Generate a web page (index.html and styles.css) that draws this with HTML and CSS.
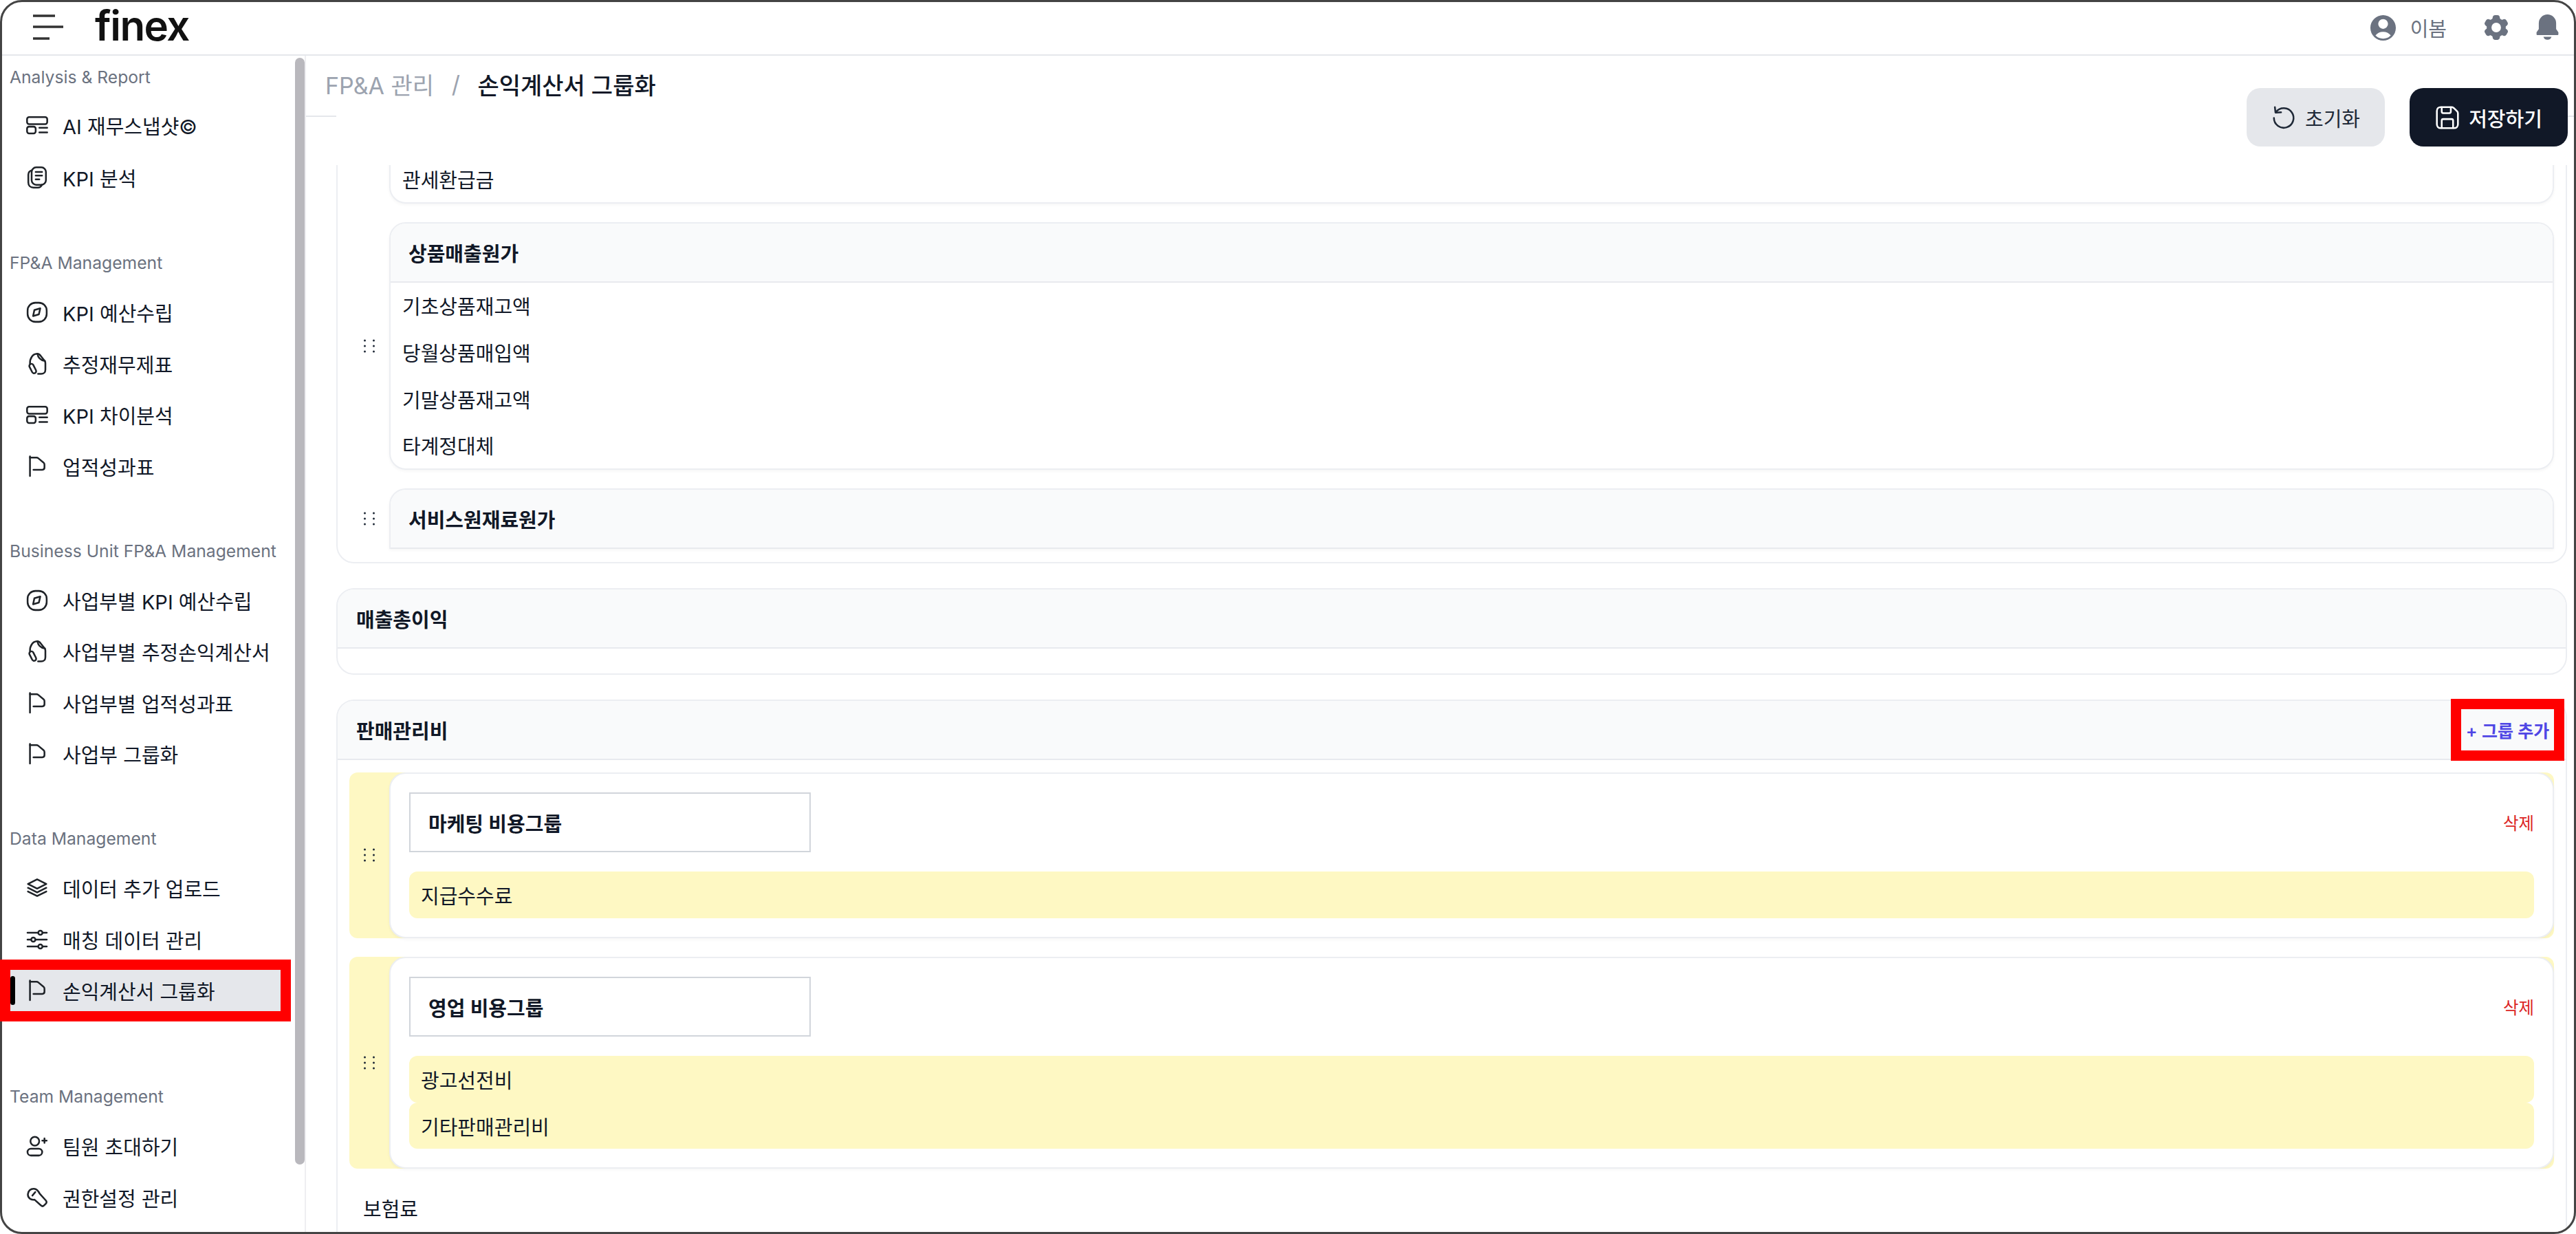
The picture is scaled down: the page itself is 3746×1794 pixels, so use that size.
FILE: index.html
```html
<!DOCTYPE html>
<html lang="ko">
<head>
  <meta charset="UTF-8" />
  <meta name="viewport" content="width=device-width, initial-scale=1.0"/>
  <title>finex - 손익계산서 그룹화</title>
  <link rel="stylesheet" href="styles.css">
</head>
<body>
  <svg class="sprite" xmlns="http://www.w3.org/2000/svg">
    <symbol id="i-report" viewBox="0 0 24 24"><rect x="1" y="3.2" width="22" height="7.6" rx="2.2"/><rect x="1" y="13.6" width="9.4" height="7.4" rx="2.2"/><path d="M14.4 14.8H23M14.4 19.8H23"/></symbol>
    <symbol id="i-docs" viewBox="0 0 24 24"><rect x="6" y="1" width="15.6" height="19" rx="5"/><path d="M10.4 6h7M10.4 10h7M10.4 14h4"/><path d="M6 4.2C3.6 5 2.4 6.6 2.4 9v8.4c0 3.4 2.2 5.6 5.6 5.6h4.6c2.2 0 3.8-1 4.6-3"/></symbol>
    <symbol id="i-compass" viewBox="0 0 24 24"><rect x="1.6" y="1.6" width="20.8" height="20.8" rx="8.5"/><path class="solid" d="M9 9.6l6.4-1.9-1.5 6.6-6.3 1.8z"/></symbol>
    <symbol id="i-note" viewBox="0 0 24 24"><path d="M4.200 11.500C4 6 7 1.200 12 1c2 0 3 .8 3.800 2.200l4.500 5.600c.5.700.7 1.500.7 2.500v7c0 2.800-1.800 4.600-4.600 4.600h-3.400"/><path d="M12.500 1.200c.3 3.500 3 7 8 7.600"/><rect x="4.900" y="11.600" width="4.600" height="11" rx="2.300" transform="rotate(-27 7.200 17.100)"/></symbol>
    <symbol id="i-flag" viewBox="0 0 24 24"><path d="M4.200 1.200V22.500"/><path d="M4.200 2.400h7.200c.8 0 1.200.2 1.800.7l5.700 4.700c.8.700 1.100 1.300 1.100 2.300v3.300c0 1.500-.8 2.300-2.300 2.300H8"/></symbol>
    <symbol id="i-layers" viewBox="0 0 24 24"><path d="M12 2.600l10 5-10 5-10-5z"/><path d="M2 11.800l10 5 10-5"/><path d="M2 15.800l10 5 10-5"/></symbol>
    <symbol id="i-sliders" viewBox="0 0 24 24"><path d="M1.500 4.500h11.200M18.200 4.500h4.300M1.500 12h3.500M10.500 12h12M1.500 19.500h11.200M18.200 19.500h4.300"/><circle cx="15.500" cy="4.500" r="2.300"/><circle cx="7.800" cy="12" r="2.300"/><circle cx="15.500" cy="19.500" r="2.300"/></symbol>
    <symbol id="i-user-plus" viewBox="0 0 24 24"><circle cx="9.500" cy="6.800" r="4.800"/><rect x="1.500" y="15" width="16" height="7.400" rx="3.700"/><path d="M20 3.800v4.800M17.600 6.200h4.800"/></symbol>
    <symbol id="i-key" viewBox="0 0 24 24"><path d="M14.800 7.800l6.700 7.400c.9 1.100.9 2.500 0 3.500l-1.900 1.900c-1 1-2.400 1-3.400 0l-7-6.300c-4 .8-7.500-1.900-7.300-6C2.100 4.800 5 2.200 8.500 2.400c2.800.1 5 2.700 6.300 5.400z"/><path d="M6.800 9.800L10 6"/></symbol>
    <symbol id="i-reset" viewBox="0 0 24 24"><path d="M4.600 6.400a9.500 9.500 0 1 1-2.100 6"/><path d="M3.400 1.800l.6 5.300 5.400-.3"/></symbol>
    <symbol id="i-save" viewBox="0 0 24 24"><path d="M5.500 1.800h10.600c.8 0 1.400.3 2 .8l3.200 3.200c.6.600.9 1.300.9 2.100v10.600c0 2.200-1.500 3.700-3.700 3.700H5.500c-2.200 0-3.700-1.500-3.700-3.700V5.500c0-2.200 1.500-3.700 3.700-3.700z"/><path d="M6.500 22v-7.200c0-.9.500-1.400 1.400-1.400h8.200c.9 0 1.400.5 1.400 1.400V22"/><path d="M6.500 2v4.200c0 .9.500 1.400 1.400 1.400h6c.9 0 1.400-.5 1.400-1.400V2"/></symbol>
    <symbol id="i-grip" viewBox="0 0 16 20"><circle cx="1.500" cy="2" r="1.500"/><circle cx="14.500" cy="2" r="1.500"/><circle cx="1.500" cy="10" r="1.500"/><circle cx="14.500" cy="10" r="1.500"/><circle cx="1.500" cy="18" r="1.500"/><circle cx="14.500" cy="18" r="1.500"/></symbol>
  </svg>

  <div class="window">
    <header class="topbar">
      <svg class="menu-icon" viewBox="0 0 44 36"><path d="M0 2h32M0 18h44M0 35h24"/></svg>
      <span class="logo">finex</span>
      <div class="topbar-right">
        <svg class="top-icon user-icon" viewBox="2.250 2.250 19.500 19.500"><path fill-rule="evenodd" d="M18.685 19.097A9.723 9.723 0 0021.750 12c0-5.385-4.365-9.750-9.750-9.750S2.250 6.615 2.250 12a9.723 9.723 0 003.065 7.097A9.716 9.716 0 0012 21.750a9.716 9.716 0 006.685-2.653zm-12.540-1.285A7.486 7.486 0 0112 15a7.486 7.486 0 015.855 2.812A8.224 8.224 0 0112 20.250a8.224 8.224 0 01-5.855-2.438zM15.750 9a3.750 3.750 0 11-7.500 0 3.750 3.750 0 017.500 0z"/></svg>
        <span class="user-name">이봄</span>
        <svg class="top-icon gear-icon" viewBox="2.300 2.250 19.400 19.500"><path fill-rule="evenodd" d="M11.078 2.250c-.917 0-1.699.663-1.850 1.567L9.050 4.889c-.02.120-.115.260-.297.348a7.493 7.493 0 00-.986.570c-.166.115-.334.126-.450.083L6.300 5.508a1.875 1.875 0 00-2.282.819l-.922 1.597a1.875 1.875 0 00.432 2.385l.840.692c.095.078.170.229.154.430a7.598 7.598 0 000 1.139c.015.200-.059.352-.153.430l-.841.692a1.875 1.875 0 00-.432 2.385l.922 1.597a1.875 1.875 0 002.282.818l1.019-.382c.115-.043.283-.031.450.082.312.214.641.405.985.570.182.088.277.228.297.350l.178 1.071c.151.904.933 1.567 1.850 1.567h1.844c.916 0 1.699-.663 1.850-1.567l.178-1.072c.02-.120.114-.260.297-.349.344-.165.673-.356.985-.570.167-.114.335-.125.450-.082l1.020.382a1.875 1.875 0 002.280-.819l.923-1.597a1.875 1.875 0 00-.432-2.385l-.840-.692c-.095-.078-.170-.229-.154-.430a7.614 7.614 0 000-1.139c-.016-.200.059-.352.153-.430l.840-.692c.708-.582.891-1.590.433-2.385l-.922-1.597a1.875 1.875 0 00-2.282-.818l-1.020.382c-.114.043-.282.031-.449-.083a7.490 7.490 0 00-.985-.570c-.183-.087-.277-.227-.297-.348l-.179-1.072a1.875 1.875 0 00-1.850-1.567h-1.843zM12 15.750a3.750 3.750 0 100-7.500 3.750 3.750 0 000 7.500z"/></svg>
        <svg class="top-icon bell-icon" viewBox="2.500 1 19 22"><path d="M12 1a7.300 7.300 0 0 0-7.300 7.300v5L2.800 16v1.600c0 .5.300.8.800.8h16.800c.5 0 .8-.3.800-.8V16l-1.900-2.700v-5A7.300 7.300 0 0 0 12 1z"/><path d="M8.600 19.800h6.800A3.500 3.200 0 0 1 8.600 19.800z"/></svg>
      </div>
    </header>

    <div class="layout">
      <aside class="sidebar">
        <span class="sidebar-thumb"></span>

        <section class="nav-group nav-group-first">
          <div class="nav-label">Analysis &amp; Report</div>
          <ul class="nav-list">
            <li class="nav-item"><svg class="nav-icon"><use href="#i-report"/></svg>AI 재무스냅샷©</li>
            <li class="nav-item"><svg class="nav-icon"><use href="#i-docs"/></svg>KPI 분석</li>
          </ul>
        </section>

        <section class="nav-group nav-group-second">
          <div class="nav-label">FP&amp;A Management</div>
          <ul class="nav-list">
            <li class="nav-item"><svg class="nav-icon"><use href="#i-compass"/></svg>KPI 예산수립</li>
            <li class="nav-item"><svg class="nav-icon"><use href="#i-note"/></svg>추정재무제표</li>
            <li class="nav-item"><svg class="nav-icon"><use href="#i-report"/></svg>KPI 차이분석</li>
            <li class="nav-item"><svg class="nav-icon"><use href="#i-flag"/></svg>업적성과표</li>
          </ul>
        </section>

        <section class="nav-group">
          <div class="nav-label">Business Unit FP&amp;A Management</div>
          <ul class="nav-list">
            <li class="nav-item"><svg class="nav-icon"><use href="#i-compass"/></svg>사업부별 KPI 예산수립</li>
            <li class="nav-item"><svg class="nav-icon"><use href="#i-note"/></svg>사업부별 추정손익계산서</li>
            <li class="nav-item"><svg class="nav-icon"><use href="#i-flag"/></svg>사업부별 업적성과표</li>
            <li class="nav-item"><svg class="nav-icon"><use href="#i-flag"/></svg>사업부 그룹화</li>
          </ul>
        </section>

        <section class="nav-group">
          <div class="nav-label">Data Management</div>
          <ul class="nav-list">
            <li class="nav-item"><svg class="nav-icon"><use href="#i-layers"/></svg>데이터 추가 업로드</li>
            <li class="nav-item"><svg class="nav-icon"><use href="#i-sliders"/></svg>매칭 데이터 관리</li>
            <li class="nav-item nav-item-active"><svg class="nav-icon"><use href="#i-flag"/></svg>손익계산서 그룹화</li>
          </ul>
        </section>

        <section class="nav-group nav-group-team">
          <div class="nav-label">Team Management</div>
          <ul class="nav-list">
            <li class="nav-item"><svg class="nav-icon"><use href="#i-user-plus"/></svg>팀원 초대하기</li>
            <li class="nav-item"><svg class="nav-icon"><use href="#i-key"/></svg>권한설정 관리</li>
          </ul>
        </section>
      </aside>

      <main class="main">
        <div class="breadcrumb">
          <span class="crumb-parent">FP&amp;A 관리</span>
          <span class="crumb-sep">/</span>
          <span class="crumb-current">손익계산서 그룹화</span>
        </div>
        <div class="toolbar-strip"></div>

        <div class="actions">
          <button class="btn btn-light"><svg class="btn-icon"><use href="#i-reset"/></svg>초기화</button>
          <button class="btn btn-dark"><svg class="btn-icon"><use href="#i-save"/></svg>저장하기</button>
        </div>

        <div class="scroll">
          <div class="scroll-inner">
            <section class="panel panel-top">
              <div class="row">
                <div class="card card-cut">
                  <div class="line">관세환급금</div>
                </div>
              </div>
              <div class="row">
                <span class="grip"><svg><use href="#i-grip"/></svg></span>
                <div class="card">
                  <div class="card-head">상품매출원가</div>
                  <div class="line">기초상품재고액</div>
                  <div class="line">당월상품매입액</div>
                  <div class="line">기말상품재고액</div>
                  <div class="line">타계정대체</div>
                </div>
              </div>
              <div class="row">
                <span class="grip"><svg><use href="#i-grip"/></svg></span>
                <div class="card card-empty">
                  <div class="card-head">서비스원재료원가</div>
                </div>
              </div>
            </section>

            <section class="panel panel-plain">
              <div class="panel-head"><span>매출총이익</span></div>
              <div class="panel-empty"></div>
            </section>

            <section class="panel panel-open">
              <div class="panel-head">
                <span>판매관리비</span>
                <button class="add-group">+ 그룹 추가</button>
              </div>
              <div class="row row-yellow">
                <span class="grip"><svg><use href="#i-grip"/></svg></span>
                <div class="card card-group">
                  <div class="group-top">
                    <div class="group-name">마케팅 비용그룹</div>
                    <span class="group-del">삭제</span>
                  </div>
                  <div class="chip">지급수수료</div>
                </div>
              </div>
              <div class="row row-yellow">
                <span class="grip"><svg><use href="#i-grip"/></svg></span>
                <div class="card card-group">
                  <div class="group-top">
                    <div class="group-name">영업 비용그룹</div>
                    <span class="group-del">삭제</span>
                  </div>
                  <div class="chip">광고선전비</div>
                  <div class="chip chip-next">기타판매관리비</div>
                </div>
              </div>
              <div class="loose">보험료</div>
            </section>
          </div>
        </div>
      </main>
    </div>
  </div>
</body>
</html>
```

FILE: styles.css
```css
* {
  box-sizing: border-box;
}

body {
  margin: 0;
  font-family: Inter, "Noto Sans CJK KR", sans-serif;
  font-size: 29px;
  color: #111827;
  background: #fff;
}

.sprite {
  display: none;
}

/* Window frame */
.window {
  width: 3746px;
  height: 1794px;
  border: 3px solid #444;
  border-radius: 32px;
  display: flex;
  flex-direction: column;
}

/* Top bar */
.topbar {
  height: 78px;
  flex: none;
  display: flex;
  align-items: center;
  padding: 0 22px 2px 45px;
  border-bottom: 2px solid #e5e7eb;
}

.menu-icon {
  width: 44px;
  height: 36px;
  margin-top: -2px;
  fill: none;
  stroke: #333;
  stroke-width: 3.4;
  overflow: visible;
}

.logo {
  margin-left: 46px;
  margin-top: -6px;
  font-size: 60px;
  line-height: 60px;
  font-weight: 600;
  letter-spacing: -1.5px;
  color: #111;
}

.topbar-right {
  margin-left: auto;
  display: flex;
  align-items: center;
  color: #6b7280;
}

.top-icon {
  fill: #6b7280;
  display: block;
}

.user-icon {
  width: 37px;
  height: 37px;
}

.user-name {
  margin-left: 21px;
  margin-right: 54px;
}

.gear-icon {
  width: 36px;
  height: 36px;
  margin-right: 40px;
}

.bell-icon {
  width: 33px;
  height: 38px;
}

/* Layout */
.layout {
  flex: 1;
  min-height: 0;
  display: flex;
}

/* Sidebar */
.sidebar {
  position: relative;
  width: 442px;
  flex: none;
  padding: 14px 35px 0 12px;
  border-right: 2px solid #eeeef1;
}

.sidebar-thumb {
  position: absolute;
  top: 3px;
  right: 0;
  width: 14px;
  height: 1609px;
  border-radius: 7px;
  background: #b9b8bd;
}

.nav-group {
  margin-top: 76px;
}

.nav-group-first {
  margin-top: 0;
}

.nav-group-second {
  margin-top: 77px;
}

.nav-group-team {
  margin-top: 107px;
}

.nav-label {
  height: 34px;
  margin-left: -1px;
  margin-bottom: 25px;
  font-size: 24.7px;
  line-height: 34px;
  color: #6b7280;
  white-space: nowrap;
}

.nav-group-first .nav-label {
  margin-bottom: 23px;
}

.nav-list {
  list-style: none;
  margin: 0;
  padding: 0;
  display: flex;
  flex-direction: column;
  gap: 14.5px;
}

.nav-group-first .nav-list {
  gap: 16px;
}

.nav-item {
  position: relative;
  height: 60px;
  display: flex;
  align-items: center;
  gap: 21px;
  padding-left: 23px;
  white-space: nowrap;
}

.nav-icon {
  width: 32px;
  height: 32px;
  flex: none;
  fill: none;
  stroke: #1f2328;
  stroke-width: 1.9;
  stroke-linecap: round;
  stroke-linejoin: round;
}

.nav-icon .solid {
  fill: #1f2328;
}

.nav-item-active {
  background: #e5e7eb;
  outline: 15px solid #f00;
}

.nav-item-active::before {
  content: "";
  position: absolute;
  left: 0;
  top: 9px;
  width: 7px;
  height: 42px;
  border-radius: 4px;
  background: #000;
}

/* Main */
.main {
  position: relative;
  flex: 1;
  min-width: 0;
  display: flex;
  flex-direction: column;
}

.breadcrumb {
  height: 89px;
  flex: none;
  display: flex;
  align-items: center;
  padding: 0 0 4px 28px;
  border-bottom: 2px solid #e5e7eb;
  font-size: 34px;
}

.crumb-parent {
  color: #9ca3af;
}

.crumb-sep {
  margin: 0 25.5px;
  color: #9ca3af;
}

.crumb-current {
  font-weight: 500;
}

.toolbar-strip {
  height: 72px;
  flex: none;
  margin: -2px 10px 0 44px;
  background: #fff;
}

.actions {
  position: absolute;
  top: 47px;
  right: 9px;
  display: flex;
  gap: 36px;
}

.btn {
  height: 85px;
  display: flex;
  align-items: center;
  justify-content: center;
  gap: 13px;
  border: 0;
  border-radius: 20px;
  font-family: inherit;
  font-size: 29px;
}

.btn-light {
  width: 201px;
  background: #e5e7eb;
  color: #1f2937;
}

.btn-dark {
  width: 230px;
  background: #111827;
  color: #fff;
  font-weight: 500;
}

.btn-icon {
  width: 36px;
  height: 36px;
  flex: none;
  fill: none;
  stroke: currentColor;
  stroke-width: 1.7;
  stroke-linecap: round;
  stroke-linejoin: round;
}

/* Scrolled content */
.scroll {
  flex: 1;
  min-height: 0;
  overflow: hidden;
  border-bottom-right-radius: 29px;
}

.scroll-inner {
  margin-top: -77px;
}

.panel {
  margin: 0 10px 36px 44px;
  border: 2px solid #eceef2;
  border-radius: 26px;
  background: #fff;
}

.panel-top {
  padding: 19px 0;
}

.panel-open {
  border-bottom: 0;
  border-radius: 26px 26px 0 0;
  margin-bottom: 0;
  padding-bottom: 80px;
}

.panel-head {
  height: 86px;
  display: flex;
  align-items: center;
  justify-content: space-between;
  padding: 0 17px 0 27px;
  border-bottom: 2px solid #e8eaee;
  border-radius: 24px 24px 0 0;
  background: #f9fafb;
  font-weight: 700;
}

.panel-head + .row {
  margin-top: 18px;
}

.panel-empty {
  height: 36px;
}

.add-group {
  width: 135px;
  height: 60px;
  padding: 0;
  border: 0;
  outline: 15px solid #f00;
  background: #f9fafb;
  color: #4f46e5;
  font-family: inherit;
  font-size: 25px;
  font-weight: 600;
  white-space: nowrap;
}

.row {
  display: flex;
  margin: 0 17px 27px;
  padding-left: 58px;
  position: relative;
  align-items: stretch;
}

.panel-top .row:last-child {
  margin-bottom: 0;
}

.row-yellow {
  background: #fef8c3;
  border-radius: 12px;
}

.grip {
  position: absolute;
  left: 21px;
  top: 50%;
  width: 16px;
  height: 20px;
  margin-top: -10px;
}

.grip svg {
  display: block;
  width: 16px;
  height: 20px;
  fill: #1f2937;
}

.card {
  flex: 1;
  min-width: 0;
  border: 2px solid #eceef2;
  border-radius: 24px;
  background: #fff;
  box-shadow: 0 2px 4px rgba(0, 0, 0, 0.04);
}

.card-cut {
  padding-top: 40px;
}

.card-empty {
  border-bottom: 0;
  border-radius: 24px 24px 0 0;
}

.card-head {
  height: 86px;
  display: flex;
  align-items: center;
  padding-left: 26px;
  border-bottom: 2px solid #e8eaee;
  border-radius: 22px 22px 0 0;
  background: #f9fafb;
  font-weight: 600;
}

.line {
  height: 67.6px;
  display: flex;
  align-items: center;
  padding-left: 17px;
}

.card-group {
  padding: 27px;
}

.group-top {
  display: flex;
  align-items: center;
  justify-content: space-between;
  margin-bottom: 28px;
}

.group-name {
  width: 584px;
  height: 87.5px;
  display: flex;
  align-items: center;
  padding-left: 26px;
  border: 2px solid #d1d5db;
  font-weight: 600;
}

.group-del {
  font-size: 24.5px;
  color: #dc2626;
}

.chip {
  height: 67.5px;
  display: flex;
  align-items: center;
  padding-left: 17px;
  border-radius: 12px;
  background: #fef8c3;
}

.loose {
  margin: 38px 0 0 37px;
  line-height: 44px;
}
```
